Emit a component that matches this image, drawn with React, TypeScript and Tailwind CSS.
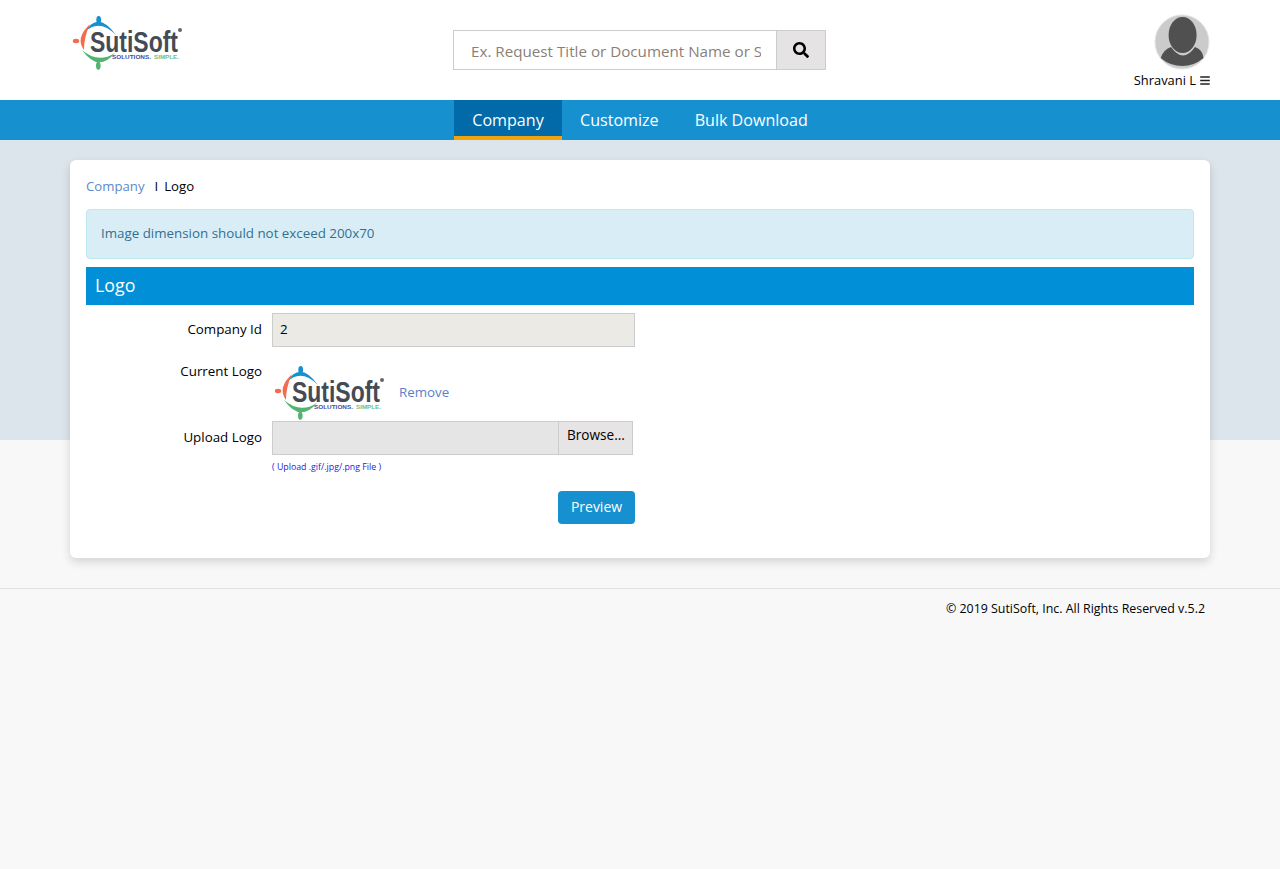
import React from 'react';
import { FaBars, FaSearch } from 'react-icons/fa';

const Logo = () => (
  <svg width="120" height="60" viewBox="0 0 120 60" className="shrink-0">
    {/* people around the ring */}
    <ellipse cx="28.7" cy="8" rx="2.4" ry="4" fill="#1790d0" />
    <path d="M15 20 Q 28 -2 46 23 Q 29 6 15 20 Z" fill="#1790d0" />
    <ellipse cx="6" cy="29" rx="3.2" ry="2.2" fill="#f26c4f" />
    <path d="M20 12 Q 5 26 14 38 Q 14 25 20 12 Z" fill="#f26c4f" />
    <ellipse cx="28.3" cy="53.7" rx="2.3" ry="4" fill="#52b56f" />
    <path d="M12 38 Q 28 61 45 41 Q 28 52 12 38 Z" fill="#52b56f" />
    <g transform="scale(1 1.18)">
      <text x="20" y="34" textLength="88" lengthAdjust="spacingAndGlyphs" fontFamily="'Liberation Sans', sans-serif" fontWeight="700" fontSize="25" fill="#444b54">
        SutiSoft
      </text>
    </g>
    <text x="42" y="47" textLength="39" lengthAdjust="spacingAndGlyphs" fontFamily="'Liberation Sans', sans-serif" fontWeight="700" fontSize="6" fill="#3f4fa3">
      SOLUTIONS.
    </text>
    <text x="84" y="47" textLength="25" lengthAdjust="spacingAndGlyphs" fontFamily="'Liberation Sans', sans-serif" fontWeight="700" fontSize="6" fill="#6cc08b">
      SIMPLE.
    </text>
    <circle cx="110" cy="18" r="2" fill="#666" />
  </svg>
);

const Avatar = () => (
  <svg width="56" height="56" viewBox="0 0 56 56">
    <circle cx="28" cy="28" r="27" fill="#cbcbcb" stroke="#e4e4e4" strokeWidth="1" />
    <path d="M6.7 44 Q 9 36 17 33 Q 29 50 41 33 Q 49 36 49.5 44 Q 40 52 28.5 52 Q 16 52 6.7 44 Z" fill="#505050" />
    <ellipse cx="28.6" cy="21" rx="14" ry="18" fill="#505050" />
  </svg>
);

const App = () => {
  return (
    <div className="min-h-screen bg-[#f8f8f8] text-[13.35px] text-black font-['Open_Sans',sans-serif]">
      <header className="h-[100px] bg-white">
        <div className="mx-auto grid w-[1140px] grid-cols-[383px_373px_1fr]">
          <div className="pt-3">
            <Logo />
          </div>
          <div className="mt-[30px] flex h-[40px] border border-[#ccc]">
            <input
              type="text"
              placeholder="Ex. Request Title or Document Name or Submitter"
              className="w-[322px] bg-white pl-[17px] pr-[15px] pt-[2px] text-[15.2px] outline-none placeholder:text-[#8a7f78]"
            />
            <button className="flex flex-1 items-center justify-center border-l border-[#ccc] bg-[#e5e3e3]">
              <FaSearch className="h-[16px] w-[16px]" />
            </button>
          </div>
          <div className="flex flex-col items-end pt-[14px]">
            <Avatar />
            <div className="mt-[1px] flex items-center gap-1 text-[12.9px]">
              Shravani L <FaBars className="h-[11px] w-[10px] text-[#222]" />
            </div>
          </div>
        </div>
      </header>

      <nav className="flex h-[40px] bg-[#1790d0] pl-[454px] text-[16.1px] text-white">
        <a className="flex w-[108px] items-center justify-center border-b-[4px] border-[#f0a30a] bg-[#026aa9] pt-[4px]">Company</a>
        <a className="flex items-center px-[18px]">Customize</a>
        <a className="flex items-center px-[18px]">Bulk Download</a>
      </nav>

      <div className="h-[300px] bg-[#dce4ec]" />

      <main className="relative mx-auto -mt-[280px] h-[398px] w-[1140px] rounded-[6px] bg-white px-4 shadow-[0_4px_10px_rgba(0,0,0,0.15)]">
        <div className="flex h-[49px] items-center pt-[5px] text-[13.2px]">
          <a className="text-[#5b8bc9]">Company</a>
          <span className="ml-[10px]">I</span>
          <span className="ml-[6px]">Logo</span>
        </div>

        <div className="flex h-[50px] items-center rounded-[4px] border border-[#bce8f1] bg-[#d9edf7] pb-[2px] pl-[14px] text-[#31708f]">
          Image dimension should not exceed 200x70
        </div>

        <h2 className="mt-2 flex h-[38px] items-center bg-[#0190d7] pb-[1px] pl-[9px] text-[17.8px] text-white">Logo</h2>

        <form className="mt-2">
          <div className="flex h-[34px] items-center gap-[10px]">
            <label className="w-[176px] pb-[2px] text-right">Company Id</label>
            <div className="flex h-full w-[363px] items-center border border-[#ccc] bg-[#ebeae4] pb-[2px] pl-[7px]">2</div>
          </div>

          <div className="flex h-[74px] gap-[10px]">
            <label className="w-[176px] pt-[14px] text-right">Current Logo</label>
            <div className="flex items-center pt-[16px]">
              <Logo />
              <a className="ml-[7px] text-[#5b7fc9]">Remove</a>
            </div>
          </div>

          <div className="flex gap-[10px]">
            <label className="w-[176px] pt-[6px] text-right">Upload Logo</label>
            <div className="w-[363px]">
              <div className="flex h-[34px] w-[361px] border border-[#ccc] bg-[#e5e5e5]">
                <div className="flex-1" />
                <div className="w-[74px] border-l border-[#ccc] bg-[#e6e4e4] pl-2 text-[13.6px] leading-[25px]">Browse...</div>
              </div>
              <p className="mt-[7px] text-[8.8px] leading-[10px] text-[#2a17e0]">( Upload .gif/.jpg/.png File )</p>
              <div className="mt-[19px] flex justify-end">
                <button type="button" className="h-[33px] w-[77px] rounded-[4px] bg-[#1790d0] pb-[2px] text-[14px] text-white">Preview</button>
              </div>
            </div>
          </div>
        </form>
      </main>

      <footer className="mt-[30px] border-t border-[#e2e2e2] pt-[10px] pr-[75px] text-right text-[12.4px] leading-[19px]">
        © 2019 SutiSoft, Inc. All Rights Reserved v.5.2
      </footer>
    </div>
  );
};

export default App;
